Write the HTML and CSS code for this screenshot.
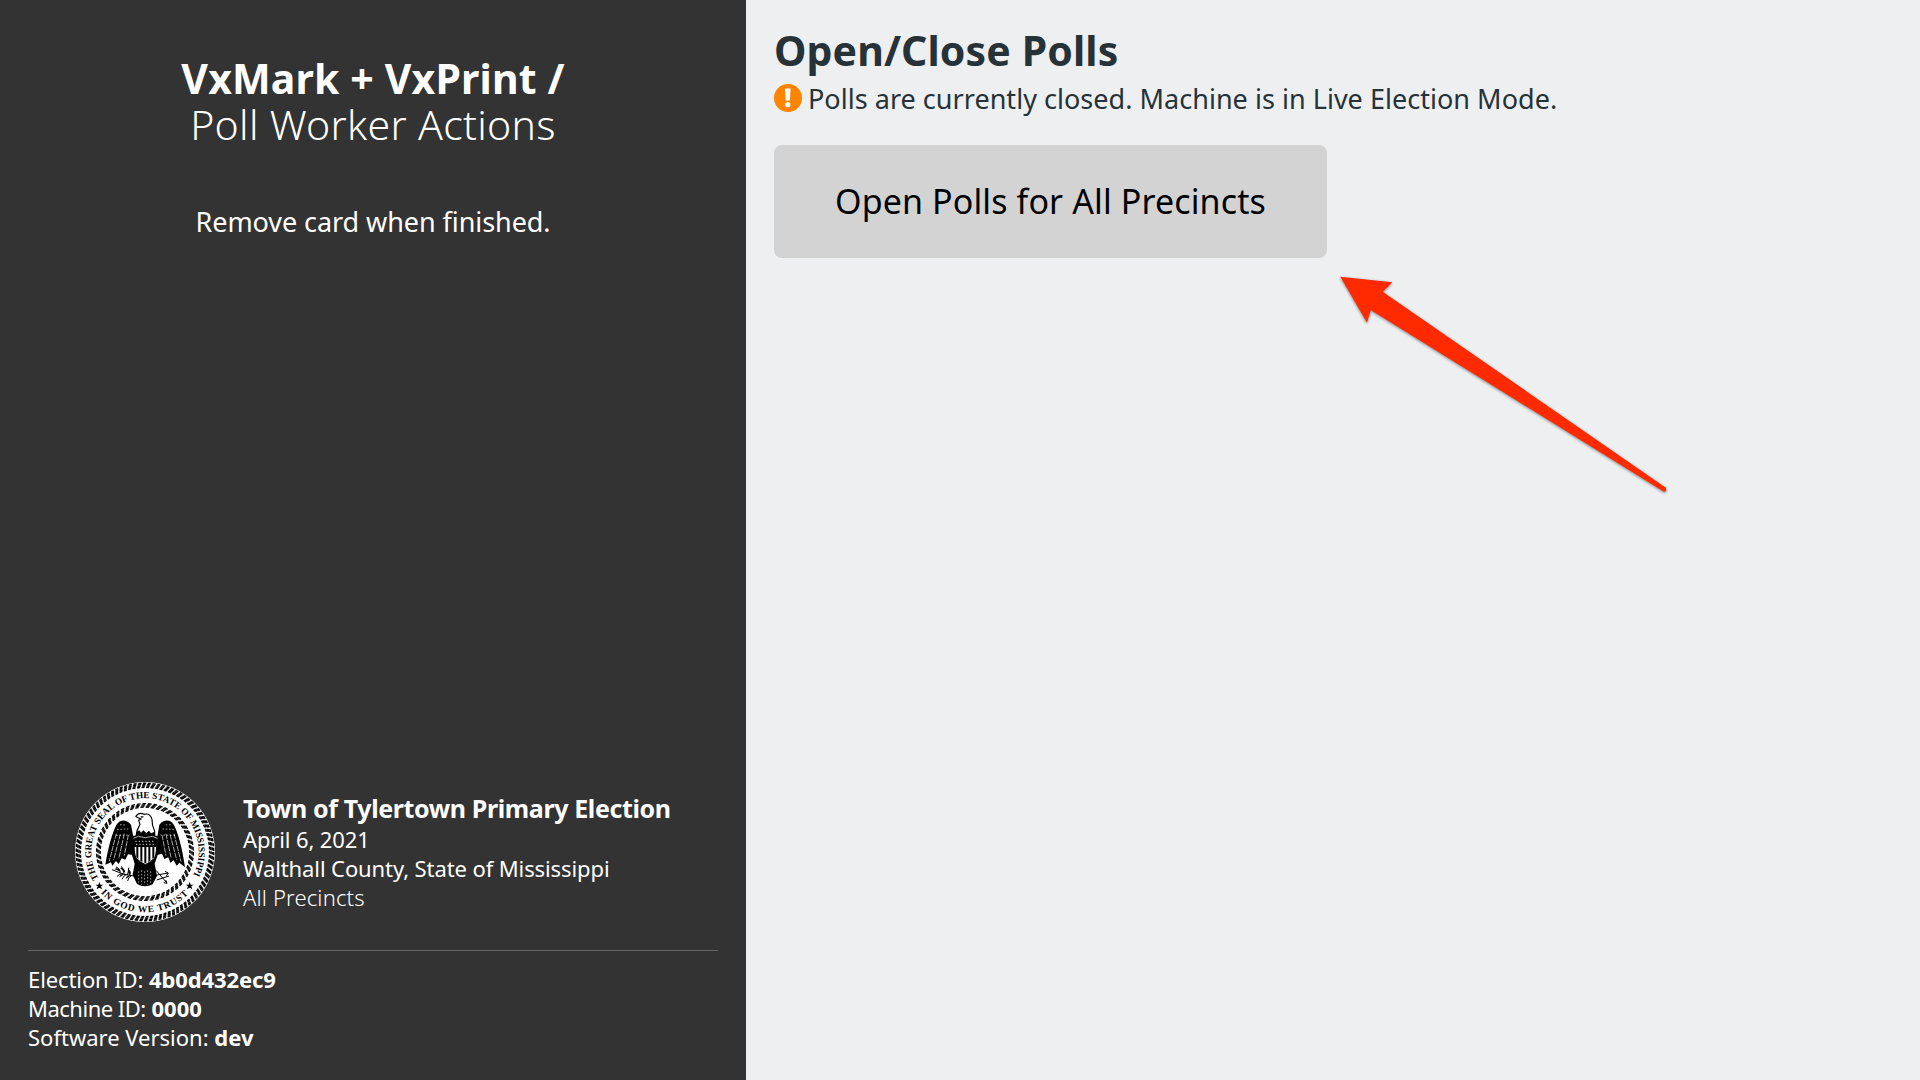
FILE: index.html
```
<!DOCTYPE html>
<html lang="en">
<head>
<meta charset="utf-8">
<title>Poll Worker Actions</title>
<link rel="stylesheet" href="styles.css">
</head>
<body>
<div class="screen">
  <aside class="sidebar">
    <header class="intro">
      <h1 class="app-title">VxMark + VxPrint /</h1>
      <div class="app-subtitle">Poll Worker Actions</div>
      <p class="hint">Remove card when finished.</p>
    </header>
    <footer class="footer">
      <div class="election">
        <svg class="seal" viewBox="45 35 420 420" aria-label="State seal">
          <defs>
            <path id="arc-top" d="M116.500 326.500A161 161 0 1 1 393.500 326.500"/>
            <path id="arc-bottom" d="M120 365A180 180 0 0 0 390 365"/>
          </defs>
          <circle cx="255" cy="245" r="210" fill="#fff"/>
          <g fill="none" stroke="#000">
            <g stroke-width="4.500" stroke-dasharray="1.350 .65">
              <circle cx="255" cy="245" r="206" pathLength="180"/>
              <circle cx="255" cy="245" r="202" pathLength="180" stroke-dashoffset=".25"/>
              <circle cx="255" cy="245" r="198" pathLength="180" stroke-dashoffset=".5"/>
              <circle cx="255" cy="245" r="194" pathLength="180" stroke-dashoffset=".75"/>
            </g>
            <g stroke-width="4" stroke-dasharray="1.300 .7">
              <circle cx="255" cy="245" r="145" pathLength="108"/>
              <circle cx="255" cy="245" r="141.500" pathLength="108" stroke-dashoffset=".3"/>
              <circle cx="255" cy="245" r="138" pathLength="108" stroke-dashoffset=".6"/>
              <circle cx="255" cy="245" r="134.500" pathLength="108" stroke-dashoffset=".9"/>
            </g>
          </g>
          <g class="seal-text">
            <text><textPath href="#arc-top" startOffset="2" textLength="662">THE GREAT SEAL OF THE STATE OF MISSISSIPPI</textPath></text>
            <text><textPath href="#arc-bottom" startOffset="3" textLength="294">IN GOD WE TRUST</textPath></text>
          </g>
          <path d="M118 335l3 8h9l-7 5 3 9-8-5-8 5 3-9-7-5h9zM389 335l3 8h9l-7 5 3 9-8-5-8 5 3-9-7-5h9z"/>
          <!-- wings -->
          <path d="M213 163C198 146 180 147 169 164C157 188 145 229 136 283L153 276L157 286L168 272L176 281L185 264L196 268L204 252L219 254L220 200ZM298 163C313 146 331 147 342 164C354 188 366 229 375 291L358 277L350 286L341 270L331 277L325 261L313 266L306 250L291 254L292 200Z"/>
          <path d="M169 190L148 272M181 192L161 268M193 190L177 262M205 194L193 256M342 190L363 274M330 192L350 268M318 190L333 262M306 194L318 256" class="feather"/>
          <path d="M171 177L205 176M168 195L210 194M342 177L307 176M345 195L301 194M180 163L199 164M332 163L312 164" class="barb"/>
          <!-- head and neck -->
          <path d="M229 136Q239 125 252 132Q270 127 276 147Q275 164 284 183L284 197H228Q230 178 240 162L236 150L243 146L228 139Z" fill="#fff" stroke="#000" stroke-width="3.500"/>
          <path d="M241 137l12 2-8 4zM228 186l10-6 5 7 7-7 9 8 8-7 6 8 11-5v14h-56z"/>
          <!-- body and tail -->
          <path d="M218 196H293V255L284 280L291 317L278 342Q254 354 231 341L218 313L224 280L216 255Z"/>
          <path d="M236 303V337M245 300V343M254 303V344M263 300V343M272 303V338" class="barb"/>
          <!-- shield -->
          <path d="M222 205L235 200L256 204L277 200L290 205Q291 249 284 263Q273 275 256 283Q239 275 228 263Q221 249 222 205Z" fill="#fff" stroke="#000" stroke-width="3"/>
          <path d="M222 205L235 200L256 204L277 200L290 205V230H222ZM229 230h6v36l-6-6zM241 230h6v45l-6-4zM253 230h6v49h-6zM265 230h6v42l-6 3zM277 230h6v30l-6 6z"/>
          <path d="M226 213h60M228 222h56" stroke="#fff" stroke-width="2.500" stroke-dasharray="4 6"/>
          <path d="M220 204L235 198L256 202L277 198L292 204" fill="none" stroke="#fff" stroke-width="2"/>
          <!-- olive branch and arrows -->
          <path d="M156 298Q185 313 226 318M168 290q10 1 13 17M184 288q6 8 8 22M206 292q0 10-4 23M171 318q8-8 18-9M186 327q5-12 13-14M203 332q2-12 11-16M288 300l32 37M286 315l38-7M290 329l37-12M315 303l10 5-6 9M317 329l4 10-10-2" class="branch"/>
          <path d="M163 296q12-7 19 8zM180 293q14-3 16 15zM178 321q2-12 17-10zM197 326q2-12 16-11zM207 298q8 5 4 16-10-5-4-16z"/>
        </svg>
        <div class="election-info">
          <h2 class="election-name">Town of Tylertown Primary Election</h2>
          <p class="election-date">April 6, 2021</p>
          <p class="election-place">Walthall County, State of Mississippi</p>
          <p class="election-precinct">All Precincts</p>
        </div>
      </div>
      <div class="machine">
        <p class="machine-election">Election ID: <strong>4b0d432ec9</strong></p>
        <p><span class="machine-label">Machine ID:</span> <strong>0000</strong></p>
        <p>Software Version: <strong>dev</strong></p>
      </div>
    </footer>
  </aside>
  <main class="main">
    <h1 class="main-title">Open/Close Polls</h1>
    <p class="status">
      <svg class="status-icon" viewBox="0 0 28 28" aria-hidden="true"><circle cx="14" cy="14" r="14" fill="#ff8500"/><path d="M11 4.500h5.600l-.7 12h-4.200z" fill="#fff"/><circle cx="13.800" cy="20.500" r="2.600" fill="#fff"/></svg>
      <span>Polls are currently closed. Machine is in Live Election Mode.</span>
    </p>
    <button class="open-button" type="button">Open Polls for All Precincts</button>
  </main>
  <svg class="pointer" viewBox="0 0 340 226" aria-hidden="true"><path d="M5.300 6.700L57.300 12.300L47.700 21.700L330.500 217.500Q332.500 221.500 329 221.800L35.700 40L32 52.700Z"/></svg>
</div>
</body>
</html>
```
FILE: styles.css
```
* { box-sizing: border-box; }
body { margin: 0; font-family: "Noto Sans", "Open Sans", sans-serif; }
h1, h2, p { margin: 0; }
.screen { position: relative; display: flex; width: 1920px; height: 1080px; overflow: hidden; background: #edeff0; color: #263238; }

.sidebar { display: flex; flex-direction: column; justify-content: space-between; width: 746px; padding: 55px 28px 28px; background: #333; color: #fff; }
.intro { text-align: center; }
.app-title { font-size: 41px; line-height: 46px; font-weight: 700; letter-spacing: .15px; }
.app-subtitle { font-size: 41px; line-height: 46px; font-weight: 300; letter-spacing: .3px; }
.hint { margin-top: 57px; font-size: 27px; line-height: 36px; letter-spacing: -.07px; }

.election { display: flex; align-items: center; gap: 28px; padding: 0 0 28px 47px; border-bottom: 1px solid #666; }
.seal { width: 140px; height: 140px; }
.seal-text { font-family: "Liberation Serif", serif; font-size: 28px; font-weight: 700; }
.feather { fill: none; stroke: #fff; stroke-width: 2; stroke-dasharray: 16 3; }
.barb { fill: none; stroke: #fff; stroke-width: 1.8; stroke-dasharray: 5 5; }
.branch { fill: none; stroke: #000; stroke-width: 3; }
.election-info { font-size: 22px; line-height: 29px; white-space: nowrap; }
.election-name { font-size: 25px; line-height: 33px; font-weight: 700; letter-spacing: -.38px; }
.election-date { letter-spacing: -.12px; }
.election-place { letter-spacing: -.1px; }
.election-precinct { font-weight: 300; letter-spacing: .15px; }
.machine { padding-top: 14px; font-size: 22px; line-height: 29px; }
.machine-election { letter-spacing: -.1px; }
.machine-label { letter-spacing: -.5px; }

.main { flex: 1; padding: 27px 28px; }
.main-title { font-size: 41px; line-height: 46px; letter-spacing: .12px; }
.status { display: flex; align-items: center; gap: 6px; margin-top: 8px; font-size: 27px; line-height: 36px; letter-spacing: .03px; }
.status-icon { width: 28px; height: 28px; margin-top: -2px; }
.open-button { display: block; width: 553px; height: 113px; margin-top: 28px; padding: 0 0 2px; border: 0; border-radius: 8px; background: #d3d3d3; color: #000; font: inherit; font-size: 34px; letter-spacing: .12px; }

/* Annotation arrow lying over the main panel */
.pointer { position: absolute; left: 1335px; top: 270px; width: 340px; height: 226px; fill: #ff2a00; filter: drop-shadow(0 1px 1.5px rgba(0, 0, 0, .45)); }
```
